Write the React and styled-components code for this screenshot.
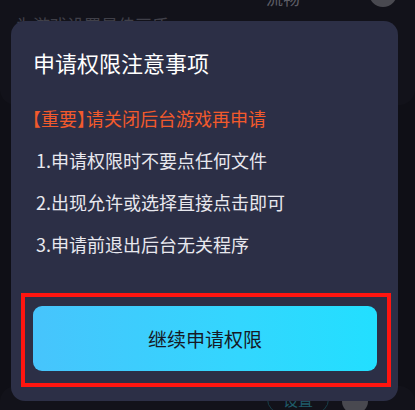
import styled, { createGlobalStyle } from "styled-components";

const GlobalStyle = createGlobalStyle`
  html, body {
    margin: 0;
    padding: 0;
    background: #13131a;
  }
  body {
    font-family: "Noto Sans CJK SC", "Noto Sans", sans-serif;
  }
`;

const Screen = styled.div`
  position: relative;
  width: 415px;
  height: 410px;
  overflow: hidden;
  background: #13131a;
`;

// settings list behind the dialog
const Backdrop = styled.div`
  display: flex;
  flex-direction: column;
  justify-content: space-between;
  height: 440px;
  margin-top: -15px;
`;

const Card = styled.div`
  display: flex;
  flex-direction: column;
  padding: ${(props) => props.pad};
  border-radius: 16px;
  background: #18181f;
  height: ${(props) => props.h}px;
  box-sizing: border-box;
`;

const SettingRow = styled.div`
  display: flex;
  align-items: center;
  justify-content: space-between;
  height: 26px;
`;

const DimText = styled.span`
  font-size: 17px;
  line-height: 24px;
  color: ${(props) => props.color || "#5e5e68"};
`;

const Subtitle = styled(DimText)`
  margin-top: 2px;
`;

const Knob = styled.div`
  width: ${(props) => props.size}px;
  height: ${(props) => props.size}px;
  border-radius: 50%;
  background: #6c6c72;
  margin: ${(props) => props.m};
`;

const RightGroup = styled.div`
  display: flex;
  align-items: center;
  gap: ${(props) => props.gap}px;
  margin-left: auto;
`;

const OutlineButton = styled.div`
  width: 62px;
  height: 30px;
  box-sizing: border-box;
  border: 1px solid #1f5a66;
  border-radius: 15px;
  display: flex;
  align-items: center;
  justify-content: center;
  font-size: 15px;
  color: #2b8799;
`;

const Overlay = styled.div`
  position: absolute;
  inset: 0;
  background: rgba(10, 10, 16, 0.35);
`;

const Dialog = styled.div`
  position: absolute;
  left: 11px;
  top: 21px;
  width: 387px;
  height: 380px;
  box-sizing: border-box;
  border-radius: 14px;
  background: #2c2f46;
  display: flex;
  flex-direction: column;
  padding-top: 26px;
`;

const Title = styled.h2`
  margin: 0;
  padding-left: 22px;
  font-size: 22px;
  line-height: 30px;
  font-weight: 400;
  color: #ffffff;
`;

const Warning = styled.p`
  margin: 29px 0 0;
  padding-left: 21px;
  font-size: 18px;
  line-height: 24px;
  color: #f35a2c;
  font-feature-settings: "halt";
`;

const Steps = styled.ol`
  list-style: none;
  margin: 9px 0 0;
  padding: 0 0 0 25px;
`;

const Step = styled.li`
  font-size: 18px;
  line-height: 42px;
  color: #e8e8ee;
`;

const Highlight = styled.div`
  margin: 28px 7px 0 10px;
  border: 4px solid #ff1510;
  padding: 9px 10px 12px 8px;
`;

const ActionButton = styled.button`
  display: flex;
  align-items: center;
  justify-content: center;
  width: 100%;
  height: 65px;
  border: none;
  border-radius: 9px;
  background: linear-gradient(90deg, #47c4fc 0%, #33d6fe 60%, #22dfff 100%);
  font-family: inherit;
  font-size: 19px;
  color: #161a26;
  cursor: pointer;
`;

const steps = [
  "1.申请权限时不要点任何文件",
  "2.出现允许或选择直接点击即可",
  "3.申请前退出后台无关程序",
];

export default function App() {
  return (
    <Screen>
      <GlobalStyle />
      <Backdrop>
        <Card h={120} pad="0 18px 0 16px">
          <SettingRow>
            <RightGroup gap={69}>
              <DimText color="#8a8a94">流畅</DimText>
              <Knob size={28} m="0 0 10px 0" />
            </RightGroup>
          </SettingRow>
          <Subtitle>为游戏设置最佳画质</Subtitle>
        </Card>
        <Card h={39} pad="0 47px 0 16px">
          <SettingRow>
            <RightGroup gap={13}>
              <OutlineButton>设置</OutlineButton>
              <Knob size={26} m="4px 0 0 0" />
            </RightGroup>
          </SettingRow>
        </Card>
      </Backdrop>
      <Overlay />
      <Dialog>
        <Title>申请权限注意事项</Title>
        <Warning>【重要】请关闭后台游戏再申请</Warning>
        <Steps>
          {steps.map((s) => (
            <Step key={s}>{s}</Step>
          ))}
        </Steps>
        <Highlight>
          <ActionButton>继续申请权限</ActionButton>
        </Highlight>
      </Dialog>
    </Screen>
  );
}
